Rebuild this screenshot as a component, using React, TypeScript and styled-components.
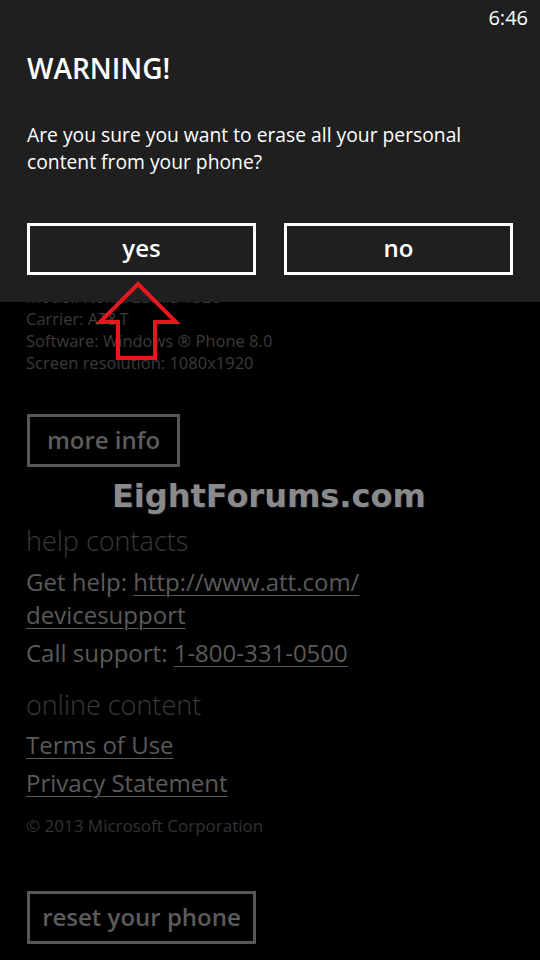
import React from "react";
import styled, { createGlobalStyle } from "styled-components";

const Global = createGlobalStyle`
  html, body { margin: 0; padding: 0; background: #000; }
  body { font-family: "Open Sans", "Noto Sans", sans-serif; }
  #root { width: 540px; height: 960px; overflow: hidden; }
`;

const Screen = styled.div`
  position: relative;
  width: 540px;
  height: 960px;
  background: #000;
  overflow: hidden;
`;

const Page = styled.div`
  display: flex;
  flex-direction: column;
  align-items: flex-start;
  padding: 286px 0 0 26px;
`;

const InfoLine = styled.div`
  font-size: 16.5px;
  line-height: 22px;
  color: #3b3b3b;
  white-space: nowrap;
`;

const OutlineButton = styled.div<{ $w: number; $mt: number }>`
  box-sizing: border-box;
  margin-top: ${(p) => p.$mt}px;
  width: ${(p) => p.$w}px;
  height: 53px;
  border: 3px solid #575757;
  display: flex;
  align-items: center;
  justify-content: center;
  color: #5c5c5c;
  font-size: 24px;
  font-weight: 600;
  padding-bottom: 3px;
  margin-left: 1px;
`;

const SectionTitle = styled.div<{ $mt: number }>`
  margin-top: ${(p) => p.$mt}px;
  font-size: 27px;
  font-weight: 300;
  line-height: 36px;
  color: #3a3a3a;
`;

const TextLine = styled.div<{ $mt?: number }>`
  margin-top: ${(p) => p.$mt ?? 0}px;
  font-size: 24px;
  line-height: 34px;
  color: #5a5a5a;
  white-space: nowrap;
`;

const Link = styled.span`
  text-decoration: underline;
  text-underline-offset: 4px;
  text-decoration-thickness: 1px;
`;

const Copyright = styled.div`
  margin-top: 14px;
  font-size: 17px;
  line-height: 24px;
  color: #333;
`;

const Dialog = styled.div`
  position: absolute;
  left: 0;
  top: 0;
  width: 540px;
  height: 302px;
  background: #1f1f1f;
  box-sizing: border-box;
  padding: 0 27px;
  display: flex;
  flex-direction: column;
`;

const StatusBar = styled.div`
  height: 34px;
  display: flex;
  justify-content: flex-end;
  align-items: center;
  color: #fff;
  font-size: 20px;
  margin-right: -15px;
`;

const Title = styled.div`
  margin-top: 17px;
  font-size: 28px;
  font-weight: 600;
  color: #fff;
  line-height: 34px;
`;

const Message = styled.div`
  margin-top: 36px;
  font-size: 19.3px;
  line-height: 27px;
  color: #fff;
`;

const ButtonRow = styled.div`
  margin-top: 48px;
  display: flex;
  gap: 28px;
`;

const DialogButton = styled.div`
  box-sizing: border-box;
  width: 229px;
  height: 52px;
  border: 3px solid #fff;
  display: flex;
  align-items: center;
  justify-content: center;
  color: #fff;
  font-size: 24px;
  font-weight: 600;
  padding-bottom: 4px;
`;

const Watermark = styled.div`
  position: absolute;
  left: 112px;
  top: 478px;
  font-family: "DejaVu Sans", sans-serif;
  font-weight: bold;
  font-size: 32px;
  line-height: 36px;
  color: #8a8a8a;
  text-shadow: 1px 1px 1px #1a1a2a;
`;

const Arrow = styled.svg`
  position: absolute;
  left: 0;
  top: 0;
`;

export default function App() {
  return (
    <Screen>
      <Global />
      <Page>
        <InfoLine>Model: Nokia Lumia 1520</InfoLine>
        <InfoLine>Carrier: AT&amp;T</InfoLine>
        <InfoLine>Software: Windows ® Phone 8.0</InfoLine>
        <InfoLine>Screen resolution: 1080x1920</InfoLine>
        <OutlineButton $w={153} $mt={40}>more info</OutlineButton>
        <SectionTitle $mt={56}>help contacts</SectionTitle>
        <TextLine $mt={6}>
          Get help: <Link>http://www.att.com/</Link>
        </TextLine>
        <TextLine $mt={-1}>
          <Link>devicesupport</Link>
        </TextLine>
        <TextLine $mt={4}>
          Call support: <Link>1-800-331-0500</Link>
        </TextLine>
        <SectionTitle $mt={17}>online content</SectionTitle>
        <TextLine $mt={5}>
          <Link>Terms of Use</Link>
        </TextLine>
        <TextLine $mt={4}>
          <Link>Privacy Statement</Link>
        </TextLine>
        <Copyright>© 2013 Microsoft Corporation</Copyright>
        <OutlineButton $w={229} $mt={53}>reset your phone</OutlineButton>
      </Page>

      <Watermark>EightForums.com</Watermark>

      <Dialog>
        <StatusBar>6:46</StatusBar>
        <Title>WARNING!</Title>
        <Message>
          Are you sure you want to erase all your personal
          <br />
          content from your phone?
        </Message>
        <ButtonRow>
          <DialogButton>yes</DialogButton>
          <DialogButton>no</DialogButton>
        </ButtonRow>
      </Dialog>

      <Arrow width="540" height="960" viewBox="0 0 540 960">
        <polygon
          points="138,284 176,322 155,322 155,358 118,358 118,322 100,322"
          fill="none"
          stroke="#e8161e"
          strokeWidth="4"
          strokeLinejoin="miter"
        />
      </Arrow>
    </Screen>
  );
}
